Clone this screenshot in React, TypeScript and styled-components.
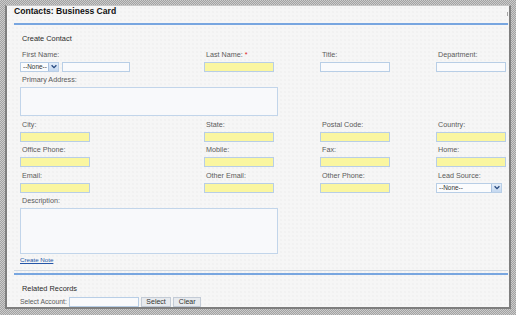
import React from 'react';
import styled, { createGlobalStyle } from 'styled-components';

const GlobalStyle = createGlobalStyle`
  html, body {
    margin: 0;
    padding: 0;
  }
  body {
    width: 516px;
    height: 315px;
    overflow: hidden;
    background: repeating-conic-gradient(#a2a2a2 0 25%, #cbcbcb 0 50%) 0 0 / 2px 2px;
    font-family: "Liberation Sans", Arial, sans-serif;
  }
`;

const Window = styled.div`
  box-sizing: border-box;
  position: relative;
  width: 506px;
  height: 304px;
  margin: 5px 0 0 5px;
  display: flex;
  flex-direction: column;
  background-color: #f6f6f6;
  background-image: radial-gradient(#ececec 0.6px, transparent 0.8px);
  background-size: 4px 4px;
  border-top: 1px solid #c6c6c6;
  border-left: 2px solid #7e7e7e;
  border-right: 2px solid #7e7e7e;
  border-bottom: 2px solid #7e7e7e;
`;

const Tick = styled.span`
  position: absolute;
  top: 6px;
  right: 1px;
  width: 1px;
  height: 4px;
  background: #a4a4a4;
`;

const Title = styled.h1`
  margin: 0;
  padding-left: 7px;
  font-size: 8.6px;
  line-height: 10px;
  font-weight: bold;
  color: #111;
`;

const Rule = styled.div<{ $gray?: boolean }>`
  margin: ${({ $gray }) => ($gray ? '6px 1px 0 7px' : '7px 1px 0 7px')};
  height: ${({ $gray }) => ($gray ? '1px' : '2px')};
  background: ${({ $gray }) => ($gray ? '#cfd8e2' : '#78a6e0')};
`;

const BlueRule = styled.div`
  margin: 2px 1px 0 7px;
  height: 2px;
  background: #78a6e0;
`;

const Section = styled.section`
  padding-left: 13px;
`;

const SectionTitle = styled.h2`
  margin: 8.5px 0 0;
  padding-left: 2px;
  font-size: 7.4px;
  line-height: 9px;
  font-weight: normal;
  color: #2b2b2b;
`;

const FieldGrid = styled.div`
  margin-top: 7px;
  display: grid;
  grid-template-columns: 184px 116px 116px 72px;
  row-gap: 3.5px;
`;

const Field = styled.div<{ $span?: number }>`
  display: flex;
  flex-direction: column;
  grid-column: span ${({ $span }) => $span ?? 1};
`;

const Label = styled.label`
  display: block;
  margin-bottom: 3px;
  padding-left: 2px;
  font-size: 7.2px;
  line-height: 9px;
  color: #5a5a5a;
  white-space: nowrap;
`;

const Star = styled.span`
  color: #d22;
`;

const Input = styled.input<{ $required?: boolean; $width?: number }>`
  box-sizing: border-box;
  width: ${({ $width }) => $width ?? 70}px;
  height: 10px;
  margin: 0;
  padding: 0 2px;
  border: 1px solid #b8cee6;
  border-radius: 0;
  background: ${({ $required }) => ($required ? '#faf6a0' : '#f9fafc')};
  font: 7px "Liberation Sans", Arial, sans-serif;
  outline: none;
`;

const TextArea = styled.textarea<{ $height: number }>`
  box-sizing: border-box;
  display: block;
  width: 258px;
  height: ${({ $height }) => $height}px;
  margin: 0;
  padding: 2px;
  border: 1px solid #c2d5ea;
  background: #f8f9fb;
  resize: none;
  outline: none;
`;

const InlineRow = styled.div`
  display: flex;
  align-items: center;
  gap: 3px;
`;

const SelectBox = styled.div<{ $width: number }>`
  box-sizing: border-box;
  display: flex;
  align-items: stretch;
  width: ${({ $width }) => $width}px;
  height: 10px;
  border: 1px solid #b8cee6;
  background: #fbfcfd;
`;

const SelectText = styled.span`
  flex: 1;
  padding-left: 2px;
  font-size: 6.4px;
  line-height: 8px;
  color: #333;
`;

const SelectArrow = styled.span`
  display: flex;
  align-items: center;
  justify-content: center;
  width: 9px;
  background: linear-gradient(#e3edf9, #c4d8f0);
  border-left: 1px solid #a9c1df;
`;

const NoteLink = styled.a`
  display: block;
  margin-top: 1px;
  font-size: 6.2px;
  line-height: 9px;
  color: #2556a8;
  text-decoration: underline;
`;

const AccountRow = styled.div`
  margin-top: 4px;
  display: flex;
  align-items: center;
  gap: 2px;
`;

const AccountLabel = styled.span`
  font-size: 6.8px;
  line-height: 9px;
  color: #5a5a5a;
`;

const Button = styled.button`
  box-sizing: border-box;
  height: 10px;
  margin: 0;
  padding: 0 4.5px;
  border: 1px solid #c3cbd6;
  border-radius: 0;
  background: #e7eaee;
  font: 7px/8px "Liberation Sans", Arial, sans-serif;
  color: #333;
`;

const Chevron = () => (
  <svg width="6" height="5" viewBox="0 0 6 5">
    <path d="M0.6 1.2 L3 3.6 L5.4 1.2" fill="none" stroke="#27497f" strokeWidth="1.3" />
  </svg>
);

const Select: React.FC<{ width: number }> = ({ width }) => (
  <SelectBox $width={width}>
    <SelectText>--None--</SelectText>
    <SelectArrow>
      <Chevron />
    </SelectArrow>
  </SelectBox>
);

type FieldDef = { label: string; required?: boolean; select?: boolean };

const rows: FieldDef[][] = [
  [
    { label: 'City:', required: true },
    { label: 'State:', required: true },
    { label: 'Postal Code:', required: true },
    { label: 'Country:', required: true },
  ],
  [
    { label: 'Office Phone:', required: true },
    { label: 'Mobile:', required: true },
    { label: 'Fax:', required: true },
    { label: 'Home:', required: true },
  ],
  [
    { label: 'Email:', required: true },
    { label: 'Other Email:', required: true },
    { label: 'Other Phone:', required: true },
    { label: 'Lead Source:', select: true },
  ],
];

export default function App() {
  return (
    <>
      <GlobalStyle />
      <Window>
        <Tick />
        <Title>Contacts: Business Card</Title>
        <Rule />

        <Section>
          <SectionTitle>Create Contact</SectionTitle>
          <FieldGrid>
            <Field>
              <Label>First Name:</Label>
              <InlineRow>
                <Select width={39} />
                <Input $width={68} />
              </InlineRow>
            </Field>
            <Field>
              <Label>
                Last Name: <Star>*</Star>
              </Label>
              <Input $required />
            </Field>
            <Field>
              <Label>Title:</Label>
              <Input />
            </Field>
            <Field>
              <Label>Department:</Label>
              <Input />
            </Field>

            <Field $span={4}>
              <Label>Primary Address:</Label>
              <TextArea $height={29} />
            </Field>

            {rows.map((row) =>
              row.map((f) => (
                <Field key={f.label}>
                  <Label>{f.label}</Label>
                  {f.select ? <Select width={66} /> : <Input $required={f.required} />}
                </Field>
              ))
            )}

            <Field $span={4}>
              <Label>Description:</Label>
              <TextArea $height={46} />
            </Field>
          </FieldGrid>
          <NoteLink href="#">Create Note</NoteLink>
        </Section>

        <Rule $gray />
        <BlueRule />

        <Section>
          <SectionTitle>Related Records</SectionTitle>
          <AccountRow>
            <AccountLabel>Select Account:</AccountLabel>
            <Input $width={70} />
            <Button>Select</Button>
            <Button>Clear</Button>
          </AccountRow>
        </Section>
      </Window>
    </>
  );
}
